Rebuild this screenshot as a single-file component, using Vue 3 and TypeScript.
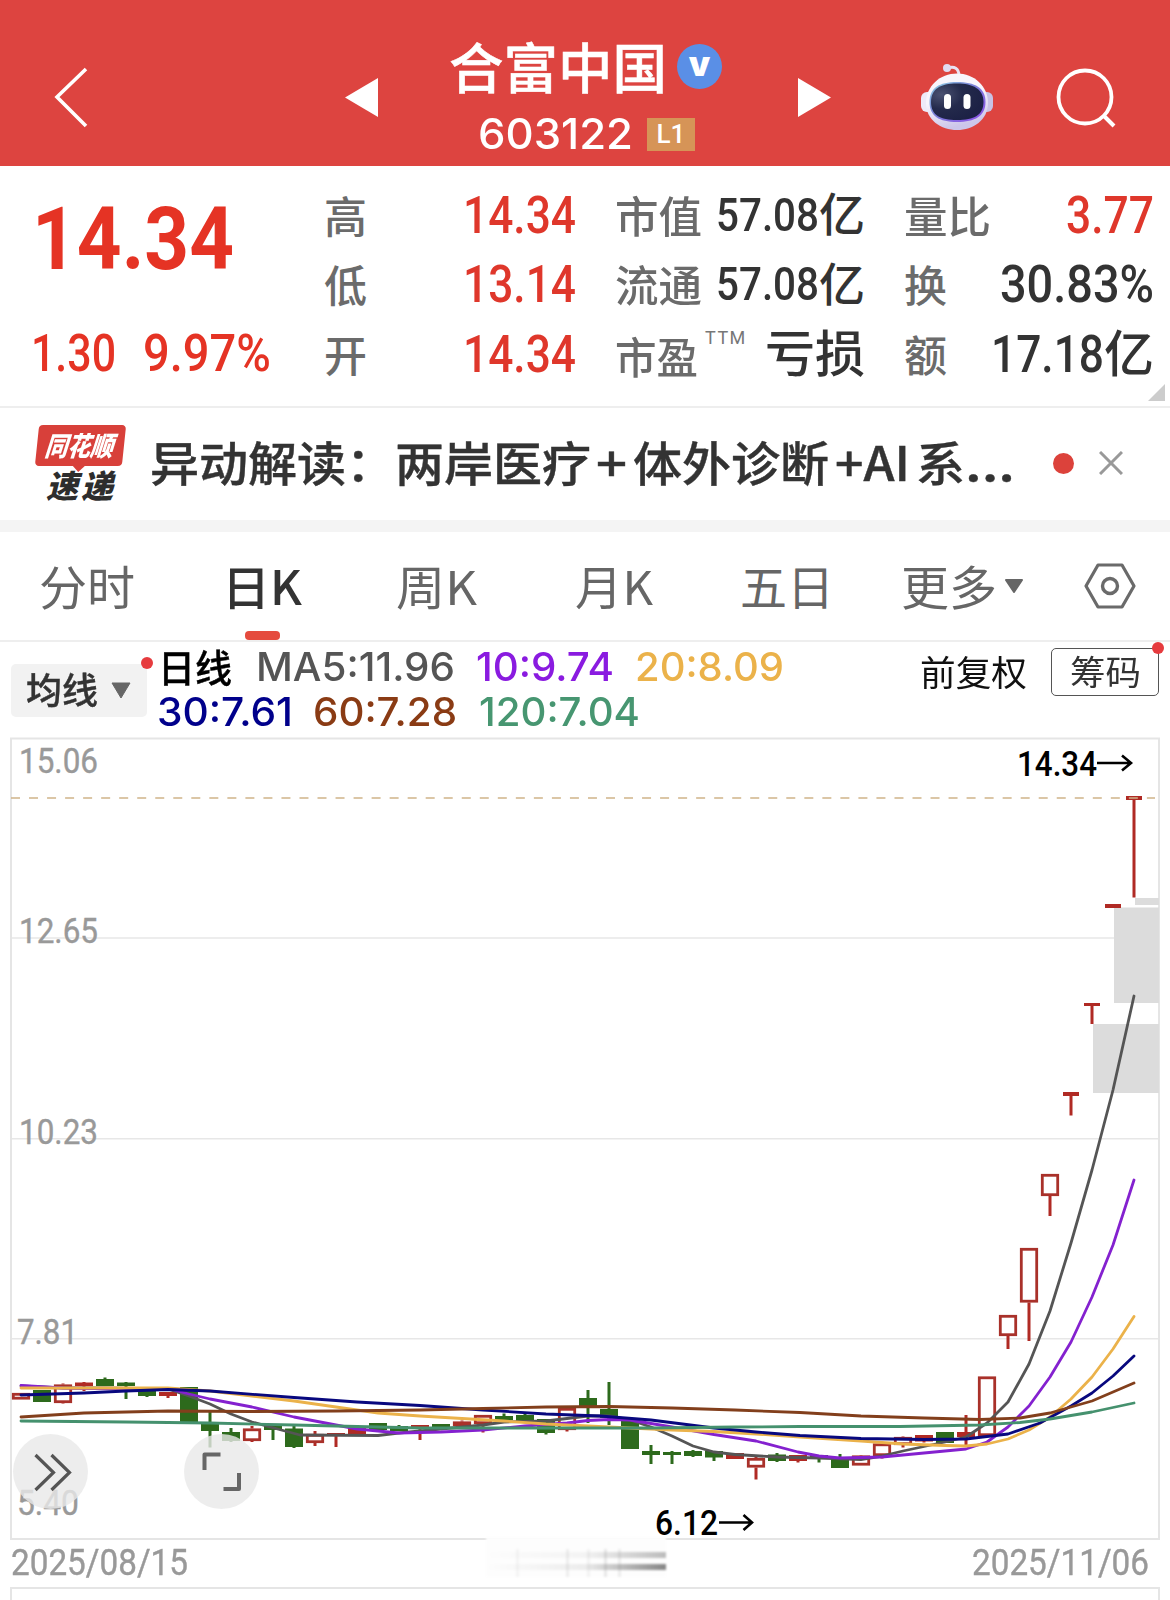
<script setup lang="ts">
import type { Directive } from 'vue'

// Squeezes or stretches a text run horizontally so that it takes the given width.
const vFit: Directive<HTMLElement, number> = {
  mounted(el, { value }) {
    const natural = el.getBoundingClientRect().width
    el.style.transform = `scaleX(${value / natural})`
    el.style.marginRight = `${value - natural}px`
  },
}

interface Metric {
  label: string
  labelWidth: number
  value: string
  valueWidth: number
  unit?: string
  unitSize?: number
  tone: 'up' | 'dark'
  size?: number
  sup?: string
}

const columns: Metric[][] = [
  [
    { label: '高', labelWidth: 43, value: '14.34', valueWidth: 113, tone: 'up' },
    { label: '低', labelWidth: 43, value: '13.14', valueWidth: 113, tone: 'up' },
    { label: '开', labelWidth: 43, value: '14.34', valueWidth: 113, tone: 'up' },
  ],
  [
    { label: '市值', labelWidth: 87, value: '57.08', valueWidth: 103, unit: '亿', unitSize: 46, tone: 'dark', size: 46 },
    { label: '流通', labelWidth: 87, value: '57.08', valueWidth: 103, unit: '亿', unitSize: 46, tone: 'dark', size: 46 },
    { label: '市盈', labelWidth: 83, value: '', valueWidth: 0, unit: '亏损', unitSize: 50, tone: 'dark', sup: 'TTM' },
  ],
  [
    { label: '量比', labelWidth: 87, value: '3.77', valueWidth: 88, tone: 'up' },
    { label: '换', labelWidth: 43, value: '30.83%', valueWidth: 154, tone: 'dark' },
    { label: '额', labelWidth: 43, value: '17.18', valueWidth: 113, unit: '亿', unitSize: 50, tone: 'dark' },
  ],
]

const tabs = [
  { name: '分时', left: 39, width: 96 },
  { name: '日K', left: 222, width: 80, active: true },
  { name: '周K', left: 396, width: 81 },
  { name: '月K', left: 575, width: 78 },
  { name: '五日', left: 740, width: 94 },
  { name: '更多', left: 901, width: 96 },
]
const tabGap = (i: number) => (i === 0 ? tabs[0].left : tabs[i].left - tabs[i - 1].left - tabs[i - 1].width)

const averages = [
  [
    { text: 'MA5:11.96', width: 199, color: '#555555', gap: 24 },
    { text: '10:9.74', width: 138, color: '#8a1be0', gap: 21 },
    { text: '20:8.09', width: 149, color: '#ebb24a', gap: 21 },
  ],
  [
    { text: '30:7.61', width: 136, color: '#00008b', gap: 0 },
    { text: '60:7.28', width: 144, color: '#8a3b14', gap: 20 },
    { text: '120:7.04', width: 161, color: '#479671', gap: 22 },
  ],
]

// kind, body top, body bottom, high, low
type Candle = ['g' | 'r' | 'h', number, number, number, number]
const candles: Candle[] = [
  ['h', 1393, 1399.5, 1393, 1399], ['g', 1390, 1402, 1390, 1402], ['h', 1384.5, 1403, 1383.5, 1403.5],
  ['r', 1382.5, 1386, 1382, 1391], ['g', 1379, 1386, 1377.5, 1386], ['g', 1382.5, 1386, 1382, 1399],
  ['g', 1391, 1396, 1391, 1397], ['r', 1392, 1396, 1392, 1398], ['g', 1387, 1422, 1387, 1422],
  ['g', 1424, 1431, 1411.5, 1447.5], ['g', 1432, 1441, 1428, 1442], ['h', 1428.5, 1441, 1426, 1442],
  ['g', 1425, 1430, 1424, 1440], ['g', 1428.5, 1447, 1426, 1448], ['h', 1434, 1443, 1431, 1446],
  ['r', 1433, 1435.5, 1433, 1447], ['r', 1428, 1434, 1428, 1434], ['g', 1423, 1430, 1423, 1430],
  ['g', 1426, 1431, 1425, 1431], ['r', 1425, 1429, 1425, 1440], ['g', 1424, 1427, 1424, 1427],
  ['h', 1421.5, 1426, 1420.5, 1426], ['h', 1415, 1424, 1415, 1432.5], ['g', 1416, 1420, 1413.5, 1420],
  ['g', 1415, 1421, 1413, 1421], ['g', 1419, 1433, 1419, 1434.5], ['h', 1408, 1430, 1408, 1431.5],
  ['g', 1398, 1406, 1390, 1423], ['g', 1409, 1418, 1382, 1425], ['g', 1418, 1449, 1418, 1449],
  ['g', 1451, 1455, 1445, 1464], ['g', 1452, 1455, 1451, 1464], ['g', 1451, 1456, 1450, 1457],
  ['g', 1451, 1457.5, 1451, 1461], ['r', 1453, 1459, 1453, 1459], ['h', 1458, 1467.5, 1456.5, 1479.5],
  ['g', 1454.5, 1461, 1453, 1462], ['r', 1455, 1461, 1455, 1462.5], ['g', 1455, 1457, 1455, 1462.5],
  ['g', 1458, 1468, 1454, 1468], ['h', 1455.5, 1465.5, 1455, 1465.5], ['h', 1443.5, 1456, 1443.5, 1458.5],
  ['h', 1437, 1445, 1436.5, 1447.5], ['r', 1435, 1441.5, 1435, 1442.5], ['g', 1432, 1443, 1432, 1443],
  ['r', 1432, 1437, 1415, 1446], ['h', 1376.5, 1436, 1376.5, 1436], ['h', 1315, 1336, 1315, 1349],
  ['h', 1248, 1302.5, 1248, 1341], ['h', 1174, 1196, 1174, 1216], ['r', 1092, 1096, 1092, 1115.5],
  ['r', 1003, 1006, 1003, 1024], ['r', 904, 908, 904, 908], ['r', 796, 800, 796, 897.5],
]
const candleX = (i: number) => 21 + i * 21

const lines = [
  { color: '#555555', points: '21,1386 63,1388 105,1388 168,1389 189,1396 210,1404 231,1414 252,1422 285,1431 300,1435 378,1435.5 399,1433 441,1429 483,1425 504,1422 546,1421 567,1418.5 588,1416 609,1416 630,1420 651,1427 672,1436 693,1446 714,1452 735,1454.5 777,1457 819,1458 861,1459.5 882,1456 903,1451 924,1446.5 945,1442 966,1437 987,1423 1008,1402 1029,1364 1050,1311 1071,1243 1092,1170 1113,1090 1134,996' },
  { color: '#8421cf', points: '21,1385.5 63,1388 126,1389 172,1389.5 189,1394 210,1399 252,1407 294,1417 336,1425 357,1429 378,1431 399,1433 441,1432 483,1430 525,1426 567,1423 588,1420.5 609,1419.5 630,1420 672,1427 714,1434.5 756,1441 798,1452 819,1456 840,1458 882,1457 924,1453 966,1449 987,1442 1008,1427 1029,1406 1050,1377 1071,1342 1092,1297 1113,1245 1134,1180' },
  { color: '#ebb24a', points: '21,1388 168,1388 210,1391 252,1396 294,1401 336,1407 378,1413 420,1416 462,1418.5 504,1421 546,1424 588,1426 630,1428 672,1430 714,1431.5 756,1434 800,1437 861,1441 903,1444 945,1445.5 966,1446 987,1444 1008,1439 1029,1430 1050,1417 1071,1399 1092,1377 1113,1349 1134,1316.5' },
  { color: '#08087e', points: '21,1395 84,1393 126,1391 168,1389.5 210,1391 294,1397.5 357,1402 420,1405.5 483,1410 546,1414 600,1416 651,1420 714,1428 756,1432 800,1435.5 861,1438.5 924,1439.5 966,1439 1008,1434 1040,1423 1071,1406 1092,1393 1113,1376 1134,1356' },
  { color: '#823f1c', points: '21,1417 84,1413 168,1411 252,1411.5 336,1411 420,1410 483,1408.5 546,1407 609,1406.5 672,1408 735,1410 800,1412.5 861,1416 924,1418 980,1419.5 1020,1418 1050,1413 1092,1401 1134,1383' },
  { color: '#45916e', points: '21,1421 126,1422 210,1423 294,1425 420,1428 546,1428 651,1428 735,1427 800,1426.5 900,1426.5 980,1425 1020,1422.5 1050,1419 1092,1412 1134,1403' },
]

const axis = [
  { text: '15.06', x: 19, y: 773, width: 79 },
  { text: '12.65', x: 19, y: 943, width: 79 },
  { text: '10.23', x: 19, y: 1143.5, width: 79 },
  { text: '7.81', x: 17, y: 1343.5, width: 61 },
  { text: '5.40', x: 17, y: 1514.5, width: 62 },
]
</script>

<template>
  <main class="screen">
    <header class="top">
      <svg class="back" width="34" height="64" viewBox="0 0 34 64"><path d="M32 4 3 32 32 61" fill="none" stroke="#fff" stroke-width="3.6" /></svg>
      <svg class="prev" width="34" height="40" viewBox="0 0 34 40"><path d="M0 20.5 33 1v39z" fill="#fff" /></svg>
      <div class="title">
        <div class="name">
          <span v-fit="218">合富中国</span>
          <i class="badge">v</i>
        </div>
        <div class="code">
          <span v-fit="155" class="num">603122</span>
          <b class="level">L1</b>
        </div>
      </div>
      <svg class="next" width="34" height="40" viewBox="0 0 34 40"><path d="M34 20.5 1 1v39z" fill="#fff" /></svg>
      <svg class="robot" width="74" height="70" viewBox="0 0 74 70">
        <defs>
          <linearGradient id="shell" x1="0" y1="0" x2="0.3" y2="1"><stop offset="0.5" stop-color="#f8f5fc" /><stop offset="1" stop-color="#ccc6ea" /></linearGradient>
          <linearGradient id="rim" x1="0" y1="0" x2="1" y2="1"><stop offset="0" stop-color="#8fd3e3" /><stop offset="0.4" stop-color="#7b85d8" /><stop offset="1" stop-color="#8c4be8" /></linearGradient>
          <radialGradient id="face" cx="0.2" cy="0.3" r="0.8"><stop offset="0" stop-color="#4b5272" /><stop offset="0.5" stop-color="#242a4c" /><stop offset="1" stop-color="#1c2145" /></radialGradient>
        </defs>
        <path d="M28 5c6-2 11 0 11 8" fill="none" stroke="#e9e2f4" stroke-width="3" />
        <circle cx="27" cy="5" r="4" fill="#e0dbf1" />
        <rect x="1" y="29" width="14" height="20" rx="6" fill="#eeeaf8" />
        <rect x="59" y="29" width="14" height="20" rx="6" fill="#c8c2e4" />
        <path d="M37 10.500C54 10.500 68 23 68 40S53 67 37 67 6 57 6 40 20 10.500 37 10.500Z" fill="url(#shell)" />
        <path d="M37 19C55 19 65.500 25 65.500 39S55 59 37 59 9.500 53 9.500 39 19 19 37 19Z" fill="url(#rim)" />
        <path d="M37 20.500C53 20.500 63.500 26 63.500 39S54 57 37 57 11 52 11 39 20 20.500 37 20.500Z" fill="url(#face)" />
        <rect x="24" y="31" width="7" height="15" rx="3.500" fill="#fff" /><rect x="43.500" y="31" width="7" height="15" rx="3.500" fill="#fff" />
      </svg>
      <svg class="search" width="62" height="62" viewBox="0 0 62 62"><circle cx="30" cy="31" r="26.500" fill="none" stroke="#fff" stroke-width="3.800" /><path d="M48 49 59 60" stroke="#fff" stroke-width="4" /></svg>
    </header>

    <section class="quote">
      <div class="price">
        <strong v-fit="202" class="din">14.34</strong>
        <div class="change din"><span v-fit="85">1.30</span><span v-fit="128">9.97%</span></div>
      </div>
      <div v-for="(col, c) in columns" :key="c" class="col">
        <div v-for="m in col" :key="m.label" class="metric">
          <span class="label" :class="{ low: m.sup }"><span v-fit="m.labelWidth">{{ m.label }}</span></span>
          <sup v-if="m.sup" class="sup">{{ m.sup }}</sup>
          <span class="value" :class="m.tone">
            <span v-if="m.value" v-fit="m.valueWidth" class="din" :style="{ fontSize: (m.size ?? 51) + 'px' }">{{ m.value }}</span>
            <span v-if="m.unit" class="unit" :style="{ fontSize: m.unitSize + 'px' }">{{ m.unit }}</span>
          </span>
        </div>
      </div>
      <i class="corner"></i>
    </section>

    <section class="news">
      <div class="brand">
        <span class="brand-top"><em v-fit="72">同花顺</em></span>
        <em class="brand-bottom">速递</em>
      </div>
      <p class="headline">
        <span v-fit="441">异动解读：两岸医疗</span>
        <span v-fit="31" class="plus">+</span>
        <span v-fit="196" class="seg2">体外诊断</span>
        <span v-fit="75" class="seg3">+AI</span>
        <span v-fit="49" class="seg4">系</span>
        <span v-fit="50">...</span>
      </p>
      <i class="unread"></i>
      <svg class="close" width="24" height="24" viewBox="0 0 24 24"><path d="M1 1 23 23M23 1 1 23" stroke="#999" stroke-width="3" /></svg>
    </section>

    <nav class="tabs">
      <span
        v-for="(t, i) in tabs"
        :key="t.name"
        class="tab"
        :class="{ active: t.active }"
        :style="{ width: t.width + 'px', marginLeft: tabGap(i) + 'px' }"
      ><span v-fit="t.width">{{ t.name }}</span></span>
      <svg class="caret" width="20" height="14" viewBox="0 0 20 14"><path d="M2 1H18L10 13Z" fill="#666" stroke="#666" stroke-width="2" stroke-linejoin="round" /></svg>
      <svg class="hex" width="54" height="48" viewBox="0 0 54 48"><path d="M15 3H39L51 24 39 45H15L3 24Z" fill="none" stroke="#6a6a6a" stroke-width="3.200" stroke-linejoin="round" /><circle cx="27" cy="24" r="7.500" fill="none" stroke="#6a6a6a" stroke-width="3.400" /></svg>
    </nav>

    <section class="legend">
      <button class="ma-btn" type="button">
        <span v-fit="72">均线</span>
        <svg width="20" height="17" viewBox="0 0 20 17"><path d="M1 1H19L10 16Z" fill="#666" stroke="#666" stroke-linejoin="round" /></svg>
        <i class="dot"></i>
      </button>
      <div class="ma">
        <div v-for="(row, r) in averages" :key="r" class="ma-row">
          <span v-if="r === 0" v-fit="75" class="period">日线</span>
          <span v-for="a in row" :key="a.text" class="ma-item" :style="{ color: a.color, paddingLeft: a.gap + 'px' }"><span v-fit="a.width">{{ a.text }}</span></span>
        </div>
      </div>
      <span class="adjust"><span v-fit="107">前复权</span></span>
      <button class="chips" type="button"><span v-fit="71">筹码</span><i class="dot"></i></button>
    </section>

    <section class="chart">
      <svg width="1170" height="830" viewBox="0 730 1170 830">
        <g stroke="#e7e7e7" stroke-width="1.500"><path d="M11 938H1159M11 1138.700H1159M11 1338.700H1159" /></g>
        <rect x="11" y="738.500" width="1148" height="800.500" fill="none" stroke="#e5e5e5" stroke-width="2" />
        <g fill="#dcdcdc"><rect x="1135" y="898" width="24" height="7" /><rect x="1114" y="907.500" width="45" height="95.500" /><rect x="1093" y="1024" width="66" height="69" /></g>
        <g class="axis"><text v-for="a in axis" :key="a.text" :x="a.x" :y="a.y" :textLength="a.width" lengthAdjust="spacingAndGlyphs">{{ a.text }}</text></g>
        <g v-for="(c, i) in candles" :key="i" :fill="c[0] === 'g' ? '#2d6a1c' : '#b02a24'">
          <template v-if="c[0] === 'h'">
            <rect :x="candleX(i) - 1.500" :y="c[3]" width="3" :height="c[1] - c[3]" />
            <rect :x="candleX(i) - 1.500" :y="c[2]" width="3" :height="Math.max(0, c[4] - c[2])" />
            <rect :x="candleX(i) - 7.700" :y="c[1] + 1.300" width="15.400" :height="c[2] - c[1] - 2.600" fill="none" stroke="#a9312a" stroke-width="2.800" />
          </template>
          <template v-else>
            <rect :x="candleX(i) - 1.500" :y="c[3]" width="3" :height="c[4] - c[3]" />
            <rect :x="candleX(i) - (i > 49 ? 8 : 9)" :y="c[1]" :width="i > 49 ? 16 : 18" :height="c[2] - c[1]" />
          </template>
        </g>
        <path d="M11 798H1155" stroke="#cfb489" stroke-width="1.600" stroke-dasharray="9 9.030" />
        <polyline v-for="l in lines" :key="l.color" :points="l.points" fill="none" :stroke="l.color" stroke-width="2.800" stroke-linejoin="round" stroke-linecap="round" />
        <g class="mark">
          <text x="1017" y="776" textLength="80" lengthAdjust="spacingAndGlyphs">14.34</text>
          <text x="655" y="1535" textLength="63" lengthAdjust="spacingAndGlyphs">6.12</text>
        </g>
        <g fill="none" stroke="#000" stroke-width="2.600"><path d="M1097 763H1131M1122 755.500 1131 763 1122 770.500" /><path d="M719 1522.500H752M743.500 1515 752 1522.500 743.500 1530" /></g>
      </svg>
      <button class="round expand" type="button"><svg width="76" height="76" viewBox="0 0 76 76"><path d="M22.500 21 40.500 38.500 22.500 56M38.500 21 56.500 38.500 38.500 56" fill="none" stroke="#555" stroke-width="3.200" /></svg></button>
      <button class="round full" type="button"><svg width="76" height="76" viewBox="0 0 76 76"><path d="M20.500 36V20.500H36.500M55 39V55H39.500" fill="none" stroke="#666" stroke-width="4" stroke-linejoin="round" /></svg></button>
    </section>

    <footer class="dates">
      <span v-fit="177">2025/08/15</span>
      <i class="smudge"></i>
      <span v-fit="177">2025/11/06</span>
    </footer>
    <div class="next-panel"></div>
  </main>
</template>

<style>
body { background: #fff; }
</style>

<style scoped>
.screen {
  width: 1170px;
  height: 1600px;
  overflow: hidden;
  background: #fff;
  display: flex;
  flex-direction: column;
  font-family: "Noto Sans CJK SC", sans-serif;
  color: #333;
}
.screen > * { flex: none; box-sizing: border-box; }
span, strong, em { white-space: nowrap; }
span, strong, em { transform-origin: 0 50%; display: inline-block; flex: none; }
svg { display: block; flex: none; }
i { flex: none; }
button { border: 0; padding: 0; margin: 0; font: inherit; color: inherit; }
.din { font-family: Roboto, sans-serif; font-weight: 500; }

.top { height: 166px; background: #dd4440; color: #fff; display: flex; align-items: center; padding-top: 28px; }
.back { margin-left: 54px; }
.prev { margin-left: 257px; }
.title { align-self: flex-start; width: 271px; margin: 5px 0 0 70px; }
.name { display: flex; align-items: center; height: 66px; font-size: 54px; font-weight: 500; line-height: 66px; }
.name > span { -webkit-text-stroke: 0.5px #fff; }
.badge { width: 45px; height: 45px; margin: 1px 0 0 10px; border-radius: 50%; background: #5a8fe6; font: 900 34px/40px Inter, sans-serif; text-align: center; }
.code { display: flex; align-items: center; height: 66px; margin: 2px 0 0 29px; line-height: 66px; }
.num { font: 500 42px/66px Inter, sans-serif; }
.level { width: 48px; height: 33px; margin-left: 14px; background: #d69457; font: 500 26px/33px Roboto, sans-serif; text-align: center; }
.next { margin-left: 77px; }
.robot { margin: 1px 0 0 89px; }
.search { margin-left: 61px; }

.quote { height: 242px; display: flex; padding-top: 14px; border-bottom: 2px solid #eee; position: relative; }
.price { width: 324px; flex: none; color: #e53324; }
.price strong { font-size: 88px; line-height: 118px; font-weight: 700; margin-left: 32px; }
.change { display: flex; gap: 27px; padding-left: 31px; font-size: 51px; line-height: 60px; margin-top: 26px; }
.col { width: 252px; flex: none; }
.col + .col { width: 250px; margin-left: 39px; }
.metric { height: 69.500px; display: flex; align-items: center; line-height: 69px; }
.label { font-size: 43px; color: #6b6b6b; font-weight: 500; margin-top: -1px; }
.label.low { padding-top: 4px; }
.sup { font: 400 18px/20px Roboto, sans-serif; letter-spacing: 1.500px; color: #777; margin: -32px 0 0 7px; }
.value { margin-left: auto; display: flex; align-items: center; }
.value.up { color: #df372b; }
.value.dark { color: #333; }
.value .din { margin-top: 1px; }
.unit { font-weight: 500; margin-top: -6px; }
.corner { position: absolute; right: 5px; bottom: 5px; width: 17px; height: 17px; background: #ccc; clip-path: polygon(100% 0, 100% 100%, 0 100%); }

.news { height: 124px; display: flex; align-items: center; border-bottom: 12px solid #f4f4f4; }
.brand { width: 87px; height: 78px; margin: 0 0 0 37px; position: relative; display: flex; flex-direction: column; }
.brand-top { height: 41px; padding-left: 8px; line-height: 39px; color: #fff; font-size: 27px; font-weight: 900; background: #d8403a; border-radius: 4px; transform: skewX(-6deg); }
.brand-top::after { content: ""; position: absolute; left: 37px; top: 40px; border: 7px solid transparent; border-top-color: #d8403a; border-bottom: 0; }
.brand-bottom { font-size: 32px; font-weight: 900; line-height: 35px; padding-left: 9px; letter-spacing: 3px; color: #2d2d2d; margin-top: 1px; }
.headline { margin: -6px 0 0 26px; width: 865px; display: flex; font-size: 47px; line-height: 70px; font-weight: 500; -webkit-text-stroke: 0.4px #333; }
.plus { margin-left: 5px; }
.seg2 { margin-left: 6px; }
.seg3 { margin-left: 6px; }
.seg4 { margin-left: 6px; }
.unread { width: 21px; height: 21px; margin: -2px 0 0 38px; border-radius: 50%; background: #dc423b; }
.close { margin: -2px 0 0 25px; }

.tabs { height: 110px; display: flex; align-items: center; border-bottom: 2px solid #eee; font-size: 47px; color: #666; font-weight: 400; }
.tab { position: relative; line-height: 105px; height: 108px; display: block; }
.tab.active { color: #333; font-weight: 500; }
.tab.active::after { content: ""; position: absolute; left: 23px; bottom: 0; width: 35px; height: 9px; border-radius: 4px; background: #e54b3e; }
.caret { margin-left: 7px; }
.hex { margin-left: 59px; }

.legend { height: 88px; display: flex; align-items: flex-start; }
.ma-btn { position: relative; width: 136px; height: 53px; margin: 22px 0 0 11px; border-radius: 5px; background: #f2f2f2; display: flex; align-items: center; font-size: 36px; line-height: 38px; font-weight: 500; padding-left: 15px; gap: 13px; }
.ma-btn > span { margin-top: -5px; -webkit-text-stroke: 0.4px #333; }
.dot { position: absolute; right: -6px; top: -7px; width: 12px; height: 12px; border-radius: 50%; background: #e63b3e; }
.ma { margin: 3px 0 0 10px; width: 763px; flex: none; }
.ma-row { height: 45px; display: flex; align-items: center; font: 500 39.500px/45px Inter, sans-serif; }
.period { font: 500 38px/45px "Noto Sans CJK SC", sans-serif; color: #000; padding-left: 1px; margin-top: -5px; -webkit-text-stroke: 0.4px #000; }
.adjust { font-size: 35px; line-height: 50px; color: #111; margin-top: 4px; width: 107px; }
.chips { position: relative; box-sizing: border-box; width: 108px; height: 48px; margin: 6px 0 0 24px; border: 1.500px solid #555; border-radius: 5px; background: #fff; font-size: 34px; line-height: 43px; padding-left: 18px; text-align: left; font-weight: 400; display: flex; }

.chart { height: 811px; position: relative; }
.axis { font: 400 35px Roboto, sans-serif; fill: #999; stroke: #999; stroke-width: 0.4px; }
.mark { font: 500 35.500px Roboto, sans-serif; fill: #000; }
.round { position: absolute; top: 704px; width: 75px; height: 75px; border-radius: 50%; background: rgba(232, 232, 232, 0.8); }
.expand { left: 12.500px; }
.full { left: 183.500px; }

.dates { height: 46px; padding: 0 21px 2px 11px; display: flex; justify-content: space-between; align-items: center; position: relative; font: 400 36px/42px Roboto, sans-serif; color: #999; -webkit-text-stroke: 0.4px #999; }
.smudge {
  position: absolute; left: 486px; top: -4px; width: 180px; height: 40px;
  background:
    linear-gradient(90deg, transparent, rgba(90, 90, 90, 0.06) 55%, rgba(90, 90, 90, 0.4)) 0 15px / 100% 6px no-repeat,
    linear-gradient(90deg, transparent, rgba(90, 90, 90, 0.1) 55%, rgba(70, 70, 70, 0.65)) 0 27px / 100% 6px no-repeat,
    linear-gradient(90deg, transparent 30px, #f4f4f4 30px, #f4f4f4 33px, transparent 33px, transparent 80px, #eee 80px, #eee 83px, transparent 83px, transparent 101px, #f2f2f2 101px, #f2f2f2 104px, transparent 104px, transparent 118px, #e8e8e8 118px, #e8e8e8 121px, transparent 121px, transparent 132px, #ececec 132px, #ececec 135px, transparent 135px) 0 12px / 100% 28px no-repeat,
    #fdfdfd;
  filter: blur(1px);
}
.next-panel { width: 1150px; height: 20px; margin-left: 10px; border: 2px solid #e5e5e5; border-bottom: 0; }
</style>
